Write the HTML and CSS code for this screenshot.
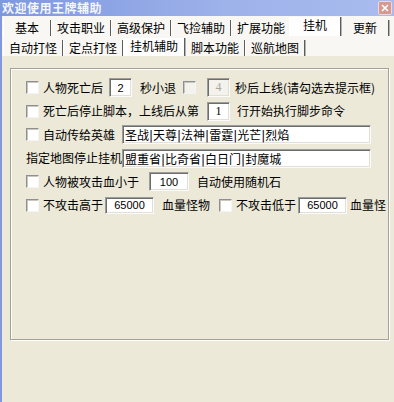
FILE: index.html
```html
<!DOCTYPE html>
<html lang="zh-CN">
  <head>
    <meta charset="UTF-8" />
    <title>欢迎使用王牌辅助</title>
    <link rel="stylesheet" href="styles.css">
  </head>
  <body>
    <div class="titlebar">
      <span class="title">欢迎使用王牌辅助</span>
      <span class="close">
        <svg width="8" height="8" viewBox="0 0 8 8">
          <path d="M1 1 L7 7 M7 1 L1 7" stroke="#fff" stroke-width="1.6" />
        </svg>
      </span>
    </div>

    <div class="frame">
      <div class="tabs main-tabs">
        <div class="tab">基本</div>
        <div class="tab">攻击职业</div>
        <div class="tab">高级保护</div>
        <div class="tab">飞捡辅助</div>
        <div class="tab">扩展功能</div>
        <div class="tab active">挂机</div>
        <div class="tab">更新</div>
      </div>

      <div class="tabs sub-tabs">
        <div class="tab">自动打怪</div>
        <div class="tab">定点打怪</div>
        <div class="tab active">挂机辅助</div>
        <div class="tab">脚本功能</div>
        <div class="tab">巡航地图</div>
      </div>

      <div class="group">
        <div class="row">
          <input type="checkbox" class="cb" />
          <span>人物死亡后</span>
          <input type="text" class="num ml6" value="2" />
          <span class="ml8">秒小退</span>
          <input type="checkbox" class="cb ml7" disabled />
          <input type="text" class="num serif ml7" value="4" disabled />
          <span class="ml5">秒后上线(请勾选去提示框)</span>
        </div>

        <div class="row">
          <input type="checkbox" class="cb" />
          <span>死亡后停止脚本，上线后从第</span>
          <input type="text" class="num serif ml8" value="1" />
          <span class="ml7">行开始执行脚步命令</span>
        </div>

        <div class="row">
          <input type="checkbox" class="cb" />
          <span>自动传给英雄</span>
          <input type="text" class="line ml7" value="圣战|天尊|法神|雷霆|光芒|烈焰" />
        </div>

        <div class="row">
          <span>指定地图停止挂机</span>
          <input type="text" class="line" value="盟重省|比奇省|白日门|封魔城" />
        </div>

        <div class="row">
          <input type="checkbox" class="cb" />
          <span>人物被攻击血小于</span>
          <input type="text" class="num wide ml10" value="100" />
          <span class="ml8">自动使用随机石</span>
        </div>

        <div class="row">
          <input type="checkbox" class="cb" />
          <span>不攻击高于</span>
          <input type="text" class="num hp ml2" value="65000" />
          <span class="ml8">血量怪物</span>
          <input type="checkbox" class="cb ml9" />
          <span>不攻击低于</span>
          <input type="text" class="num hp ml2" value="65000" />
          <span class="ml3">血量怪</span>
        </div>
      </div>
    </div>
  </body>
</html>
```

FILE: styles.css
```css
body {
  margin: 0;
  width: 394px;
  height: 402px;
  overflow: hidden;
  background-color: #ece9d8;
  font-family: "Noto Sans CJK SC", "Liberation Sans", sans-serif;
  font-size: 12px;
  line-height: 14px;
  color: #000;
}

/* window caption (inactive xp style) */
.titlebar {
  height: 16px;
  display: flex;
  align-items: center;
  justify-content: space-between;
  background: linear-gradient(to right, #7e98df, #9fb3eb 60%, #a9bbee);
}
.title {
  padding-left: 2px;
  color: #f4f7fd;
  font-weight: bold;
  letter-spacing: 0.5px;
}
.close {
  width: 12px;
  height: 12px;
  margin-right: 2px;
  display: flex;
  align-items: center;
  justify-content: center;
  background-color: #d49a92;
  border: 1px solid #eed9d6;
  border-radius: 2px;
}

.frame {
  height: 386px;
  border-left: 2px solid #8198de;
}

/* tab strips */
.tabs {
  display: flex;
  align-items: flex-end;
  padding-left: 1px;
  background-color: #f8f7f3;
  overflow: hidden;
}
.main-tabs {
  height: 20px;
}
.sub-tabs {
  height: 20px;
}
.tab {
  flex: none;
  min-width: 48px;
  height: 16px;
  padding: 0 5px;
  box-sizing: border-box;
  white-space: nowrap;
  text-align: center;
  line-height: 16px;
  background-color: #f8f7f3;
  border-left: 1px solid #fff;
  border-right: 1px solid #5c5c5c;
  box-shadow: 1px 0 0 #b4b4b4;
}
.tab.active {
  height: 19px;
  min-width: 52px;
  margin-left: -2px;
  padding: 0 7px;
  line-height: 16px;
  background-color: #fefefe;
  position: relative;
  z-index: 1;
}
.sub-tabs .tab {
  min-width: 60px;
}
.sub-tabs .tab.active {
  min-width: 62px;
  height: 18px;
  margin-left: 0;
  padding: 0 6px;
}

/* etched group box */
.group {
  width: 362px;
  height: 263px;
  margin: 12px 0 0 8px;
  padding: 7px 0 0 15px;
  border: 1px solid #a3a195;
  box-shadow: 1px 1px 0 #fff, inset 1px 1px 0 #fff;
}

.row {
  height: 23.5px;
  display: flex;
  align-items: center;
  white-space: nowrap;
}

.cb {
  appearance: none;
  width: 13px;
  height: 13px;
  margin: 0 4px 0 0;
  flex: none;
  background-color: #fff;
  border: 1px solid;
  border-color: #8f8f8f #f4f4f4 #f4f4f4 #8f8f8f;
  box-shadow: inset 1px 1px 0 #c9c7bd;
  box-sizing: border-box;
}
.cb:disabled {
  background-color: #f3f2ec;
}

input[type="text"] {
  flex: none;
  margin: 0;
  padding: 0 2px;
  box-sizing: border-box;
  height: 19px;
  background-color: #fff;
  border: 1px solid;
  border-color: #9c9c9c #fbfbfb #fbfbfb #9c9c9c;
  box-shadow: inset 1px 1px 0 #6e6e6e, inset -1px -1px 0 #e2e0d6;
  color: #000;
  outline: none;
}
.num {
  width: 23px;
  height: 18px;
  text-align: center;
  font-family: "Liberation Sans", sans-serif;
  font-size: 11px;
}
.num.serif {
  font-family: "Liberation Serif", serif;
  font-size: 12px;
}
.num:disabled {
  background-color: #f3f2ec;
  color: #aca899;
}
.num.wide {
  width: 40px;
}
.num.hp {
  width: 49px;
  height: 17px;
}
.line {
  width: 249px;
  font-family: "DejaVu Sans", "Noto Sans CJK SC", sans-serif;
  font-size: 12px;
}

.ml2 { margin-left: 2px !important; }
.ml3 { margin-left: 3px; }
.ml5 { margin-left: 5px; }
.ml6 { margin-left: 6px !important; }
.ml7 { margin-left: 7px !important; }
.ml8 { margin-left: 8px !important; }
.ml9 { margin-left: 9px !important; }
.ml10 { margin-left: 10px !important; }
```
